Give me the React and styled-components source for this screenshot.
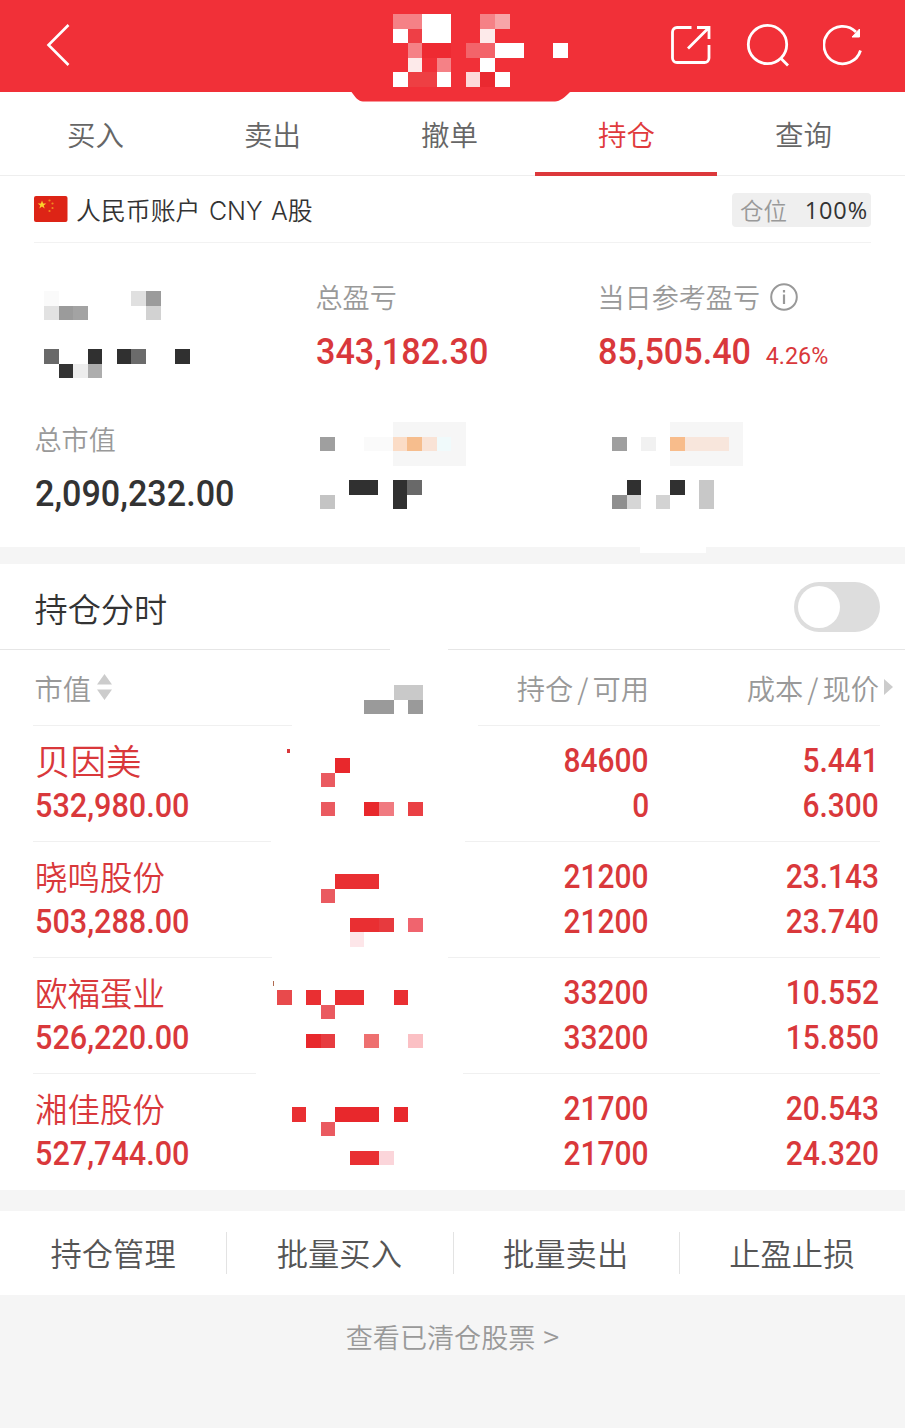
import React from "react";
import styled, { createGlobalStyle } from "styled-components";

const GlobalStyle = createGlobalStyle`
  * {
    box-sizing: border-box;
  }
  body {
    margin: 0;
    background: #f5f5f5;
    font-family: "Noto Sans CJK SC", sans-serif;
    font-weight: 350;
    color: #333;
  }
`;

const CELL = 14.565;

// each cell: [column, row, columns wide, rows high, colour]
const Mosaic = ({ cols, rows, cells, left, top }) => (
  <MosaicSvg
    width={cols * CELL}
    height={rows * CELL}
    viewBox={`0 0 ${cols} ${rows}`}
    shapeRendering="crispEdges"
    $left={left}
    $top={top}
  >
    {cells.map(([x, y, w, h, fill], i) => (
      <rect key={i} x={x} y={y} width={w} height={h} fill={fill} />
    ))}
  </MosaicSvg>
);

const TABS = ["买入", "卖出", "撤单", "持仓", "查询"];
const ACTIONS = ["持仓管理", "批量买入", "批量卖出", "止盈止损"];

const TITLE_CELLS = [
  [0, 0, 2, 1, "#f58186"],
  [2, 0, 2, 2, "#fff"],
  [6, 0, 1, 1, "#f58186"],
  [7, 0, 1, 1, "#f7a5a8"],
  [0, 1, 1, 1, "#fff"],
  [1, 1, 1, 1, "#ee3f46"],
  [6, 1, 1, 1, "#fdeaea"],
  [1, 2, 1, 1, "#f58186"],
  [2, 2, 2, 1, "#ee2a32"],
  [5, 2, 2, 1, "#f3646a"],
  [7, 2, 2, 1, "#fff"],
  [11, 2, 1, 1, "#fff"],
  [1, 3, 1, 1, "#fdeaea"],
  [3, 3, 1, 1, "#f58186"],
  [6, 3, 1, 1, "#fff"],
  [0, 4, 1, 1, "#fff"],
  [1, 4, 2, 1, "#ee3f43"],
  [3, 4, 1, 1, "#fff"],
  [5, 4, 1, 1, "#fdd9da"],
  [6, 4, 1, 1, "#ea2930"],
  [7, 4, 1, 1, "#fff"],
];

const HOLDINGS = [
  {
    name: "贝因美",
    nameSize: 35.5,
    value: "532,980.00",
    amount: ["84600", "0"],
    price: ["5.441", "6.300"],
    gap: [271, 465],
    top: 31.6,
    cells: [
      [0.7, -0.65, 0.2, 0.3, "#d9383b"],
      [4, 0, 1, 1, "#e8282c"],
      [3, 1, 1, 1, "#ea5a60"],
      [3, 3, 1, 1, "#ea5a60"],
      [6, 3, 1, 1, "#e8282c"],
      [7, 3, 1, 1, "#f07a80"],
      [9, 3, 1, 1, "#ea4044"],
    ],
  },
  {
    name: "晓鸣股份",
    value: "503,288.00",
    amount: ["21200", "21200"],
    price: ["23.143", "23.740"],
    gap: [272, 448],
    top: 32,
    cells: [
      [4, 0, 3, 1, "#e92f32"],
      [3, 1, 1, 1, "#ea5a60"],
      [5, 3, 2, 1, "#e92f32"],
      [7, 3, 1, 1, "#e73a3e"],
      [9, 3, 1, 1, "#f0646e"],
      [5, 4, 1, 1, "#fde6e9"],
    ],
  },
  {
    name: "欧福蛋业",
    value: "526,220.00",
    amount: ["33200", "33200"],
    price: ["10.552", "15.850"],
    gap: [256, 463],
    top: 32.4,
    cells: [
      [-0.3, -0.6, 0.07, 0.3, "#b06a50"],
      [0, 0, 1, 1, "#e84a4c"],
      [2, 0, 1, 1, "#e92f32"],
      [4, 0, 2, 1, "#e92f32"],
      [8, 0, 1, 1, "#e92f32"],
      [3, 1, 1, 1, "#ea5a60"],
      [2, 3, 1, 1, "#e8282c"],
      [3, 3, 1, 1, "#e73c40"],
      [6, 3, 1, 1, "#ee7070"],
      [9, 3, 1, 1, "#fbc0c4"],
    ],
  },
  {
    name: "湘佳股份",
    value: "527,744.00",
    amount: ["21700", "21700"],
    price: ["20.543", "24.320"],
    top: 32.7,
    cells: [
      [1, 0, 1, 1, "#e92f32"],
      [4, 0, 3, 1, "#e8282c"],
      [8, 0, 1, 1, "#e8282c"],
      [3, 1, 1, 1, "#ea5a60"],
      [5, 3, 2, 1, "#e92f32"],
      [7, 3, 1, 1, "#fbd5da"],
    ],
  },
];

const Header = () => (
  <TopBar>
    <BackIcon width="26" height="44" viewBox="0 0 26 44">
      <path d="M23.500 2 3.500 22l20 20" />
    </BackIcon>
    <TitleBump width="224" height="12" viewBox="0 0 224 12">
      <path d="M0 0h224v.5c-2 0-3 .5-4 1.500-4 4-9 8.500-14 8.500H14C9.500 10.500 6 6 2.500 1 2 .5 1 .5 0 .5z" />
    </TitleBump>
    <Mosaic cols={12} rows={5} cells={TITLE_CELLS} left={323} top={0} />
    <TopIcons>
      <svg width="42" height="44" viewBox="0 0 42 44">
        <path d="M20.500 4.500H6a4.500 4.500 0 0 0-4.500 4.500V35A4.500 4.500 0 0 0 6 39.500h27.500A4.500 4.500 0 0 0 38 35V22" />
        <path d="M26 4.500h12V16M37.500 5 17 25.500" />
      </svg>
      <svg width="44" height="44" viewBox="0 0 44 44">
        <circle cx="21.500" cy="21.500" r="19.200" />
        <path d="m35 35.500 7 7" />
      </svg>
      <svg width="42" height="44" viewBox="0 0 42 44">
        <path d="M37.500 27.500A18.700 18.700 0 1 1 33 9" />
        <path d="M36.500 6v8h-7.500z" fill="#fff" strokeWidth="1" />
      </svg>
    </TopIcons>
  </TopBar>
);

const Account = () => (
  <AccountRow>
    <svg width="34" height="26" viewBox="0 0 34 26">
      <rect width="33.500" height="26" rx="2" fill="#dd2416" />
      <path
        d="m8 4.500 1.100 3h3.200L9.700 9.400l1 3.100L8 10.600l-2.700 1.900 1-3.100-2.600-1.900h3.200z"
        fill="#fbd22c"
      />
      <g fill="#f08a20">
        <circle cx="15.500" cy="4.500" r="1.100" />
        <circle cx="18.500" cy="7.500" r="1.100" />
        <circle cx="18.500" cy="12" r="1.100" />
        <circle cx="15.500" cy="15" r="1.100" />
      </g>
    </svg>
    <AccountName>人民币账户 CNY A股</AccountName>
    <Badge>
      仓位<b>100%</b>
    </Badge>
  </AccountRow>
);

const Summary = () => (
  <SummaryGrid>
    <div>
      <Mosaic
        cols={11}
        rows={6}
        left={9}
        top={12}
        cells={[
          [0, 0, 1, 1, "#fafafa"],
          [0, 1, 1, 1, "#e2e2e2"],
          [1, 1, 1, 1, "#9b9b9b"],
          [2, 1, 1, 1, "#a3a3a3"],
          [6, 0, 1, 1, "#e0e0e0"],
          [7, 0, 1, 1, "#9b9b9b"],
          [7, 1, 1, 1, "#d2d2d2"],
          [0, 4, 1, 1, "#696969"],
          [3, 4, 1, 1, "#303030"],
          [5, 4, 1, 1, "#303030"],
          [6, 4, 1, 1, "#6b6b6b"],
          [9, 4, 1, 1, "#303030"],
          [1, 5, 1, 1, "#333"],
          [2, 5, 1, 1, "#ededed"],
          [3, 5, 1, 1, "#adadad"],
        ]}
      />
    </div>
    <div>
      <Label>总盈亏</Label>
      <Figure $red>343,182.30</Figure>
    </div>
    <div>
      <Label>
        当日参考盈亏
        <svg width="28" height="28" viewBox="0 0 28 28">
          <circle cx="14" cy="14" r="12.800" fill="none" stroke="#999" strokeWidth="2" />
          <path d="M14 11.500v9.500M14 7v2.500" stroke="#999" strokeWidth="2.200" />
        </svg>
      </Label>
      <FigureLine>
        <Figure $red>85,505.40</Figure>
        <Percent>4.26%</Percent>
      </FigureLine>
    </div>
    <div>
      <Label>总市值</Label>
      <Figure>2,090,232.00</Figure>
    </div>
    <div>
      <Mosaic
        cols={11}
        rows={6}
        left={4}
        top={1}
        cells={[
          [5, 0, 5, 3, "#f6f6f6"],
          [0, 1, 1, 1, "#9f9f9f"],
          [3, 1, 2, 1, "#fafafa"],
          [5, 1, 1, 1, "#fbdcc6"],
          [6, 1, 1, 1, "#f6bd8d"],
          [7, 1, 1, 1, "#f9e3d6"],
          [8, 1, 1, 1, "#f0fafb"],
          [2, 4, 2, 1, "#303030"],
          [5, 4, 1, 2, "#303030"],
          [6, 4, 1, 1, "#696969"],
          [0, 5, 1, 1, "#c4c4c4"],
        ]}
      />
    </div>
    <div>
      <Mosaic
        cols={10}
        rows={6}
        left={14}
        top={1}
        cells={[
          [4, 0, 5, 3, "#f6f6f6"],
          [0, 1, 1, 1, "#9f9f9f"],
          [2, 1, 1, 1, "#f1f1f1"],
          [4, 1, 1, 1, "#f8bc8b"],
          [5, 1, 3, 1, "#f8e6dc"],
          [1, 4, 1, 1, "#303030"],
          [4, 4, 1, 1, "#303030"],
          [6, 4, 1, 2, "#c8c8c8"],
          [0, 5, 1, 1, "#8f8f8f"],
          [1, 5, 1, 1, "#d6d6d6"],
          [3, 5, 1, 1, "#d3d3d3"],
        ]}
      />
    </div>
  </SummaryGrid>
);

const Holding = ({ item }) => (
  <HoldingRow $gap={item.gap}>
    <div>
      <Name $size={item.nameSize}>{item.name}</Name>
      <Num>{item.value}</Num>
    </div>
    <Mosaic cols={10} rows={5} cells={item.cells} left={3} top={item.top} />
    <RightCell>
      <Num $right>{item.amount[0]}</Num>
      <Num $right>{item.amount[1]}</Num>
    </RightCell>
    <RightCell>
      <Num $right>{item.price[0]}</Num>
      <Num $right>{item.price[1]}</Num>
    </RightCell>
  </HoldingRow>
);

const App = () => {
  return (
    <Page>
      <GlobalStyle />
      <Header />
      <TabBar>
        {TABS.map((tab) => (
          <Tab key={tab} $active={tab === "持仓"}>
            {tab}
          </Tab>
        ))}
      </TabBar>
      <Panel>
        <Account />
        <Summary />
      </Panel>
      <Band $height={17} $notch />
      <Panel>
        <SwitchRow>
          持仓分时
          <Toggle />
        </SwitchRow>
        <ColumnHead $gap={[292, 478]}>
          <HeadLabel>
            市值
            <svg width="15" height="28" viewBox="0 0 15 28">
              <path d="M7.500 1 15 11.500H0zM7.500 27 15 16.500H0z" fill="#ccc" />
            </svg>
          </HeadLabel>
          <Mosaic
            cols={10}
            rows={2}
            left={3}
            top={34.6}
            cells={[
              [8, 0, 2, 1, "#c9c9c9"],
              [6, 1, 2, 1, "#9a9a9a"],
              [9, 1, 1, 1, "#9a9a9a"],
            ]}
          />
          <HeadLabel $right>
            持仓<i>/</i>可用
          </HeadLabel>
          <HeadLabel $right>
            成本<i>/</i>现价
            <Arrow width="9" height="16" viewBox="0 0 9 16">
              <path d="M0 0 9 8 0 16z" fill="#ccc" />
            </Arrow>
          </HeadLabel>
        </ColumnHead>
        {HOLDINGS.map((item) => (
          <Holding key={item.name} item={item} />
        ))}
      </Panel>
      <Band $height={21} />
      <ActionBar>
        {ACTIONS.map((action) => (
          <Action key={action}>{action}</Action>
        ))}
      </ActionBar>
      <Cleared>
        查看已清仓股票<span>&gt;</span>
      </Cleared>
    </Page>
  );
};

export default App;

const Page = styled.main`
  width: 905px;
  height: 1428px;
  overflow: hidden;
`;
const MosaicSvg = styled.svg`
  display: block;
  flex: none;
  overflow: visible;
  margin-left: ${(p) => p.$left}px;
  margin-top: ${(p) => p.$top}px;
`;
const TopBar = styled.header`
  position: relative;
  z-index: 1;
  display: flex;
  align-items: flex-start;
  height: 92px;
  padding: 14.2px 40px 0 45px;
  background: #f13038;
`;
const BackIcon = styled.svg`
  margin-top: 8.5px;
  margin-right: -1px;
  fill: none;
  stroke: #fff;
  stroke-width: 2.6;
`;
const TitleBump = styled.svg`
  position: absolute;
  left: 349px;
  top: 91px;
  fill: #f13038;
`;
const TopIcons = styled.div`
  display: flex;
  gap: 33px;
  margin: 9px 0 0 auto;

  svg {
    fill: none;
    stroke: #fff;
    stroke-width: 2.8;
  }
`;
const TabBar = styled.nav`
  display: flex;
  height: 84px;
  padding: 0 13px 0 7px;
  background: #fff;
  border-bottom: 1px solid #eee;
`;
const Tab = styled.div`
  position: relative;
  flex: 1;
  line-height: 83px;
  text-align: center;
  font-size: 28.5px;
  color: ${(p) => (p.$active ? "#e03a3c" : "#666")};

  &::after {
    content: "";
    display: ${(p) => (p.$active ? "block" : "none")};
    position: absolute;
    left: -3px;
    right: -2px;
    bottom: -1px;
    height: 4px;
    background: #dc383b;
  }
`;
const Panel = styled.section`
  background: #fff;
`;
const AccountRow = styled.div`
  display: flex;
  align-items: center;
  height: 67px;
  margin: 0 34px;
  border-bottom: 1px solid #f2f2f2;
`;
const AccountName = styled.span`
  margin-left: 8px;
  font-family: Inter, "Noto Sans CJK SC", sans-serif;
  font-size: 24.9px;
  word-spacing: 1.5px;
`;
const Badge = styled.span`
  display: flex;
  justify-content: space-between;
  align-items: center;
  width: 139px;
  height: 34px;
  margin-top: 1px;
  margin-left: auto;
  padding: 0 3px 0 8px;
  border-radius: 4px;
  background: #efefef;
  color: #999;
  font-size: 23.5px;

  b {
    font: 400 23.5px "Open Sans", sans-serif;
    letter-spacing: 0.9px;
    color: #333;
  }
`;
const SummaryGrid = styled.div`
  display: grid;
  grid-template-columns: 281px 282px 1fr;
  grid-template-rows: 142px 126px;
  height: 304px;
  padding: 36px 0 0 35px;
`;
const Label = styled.div`
  display: flex;
  align-items: center;
  gap: 10px;
  height: 34px;
  margin-left: -0.5px;
  font-size: 27.1px;
  color: #999;

  svg {
    margin-top: 2px;
  }
`;
const FigureLine = styled.div`
  display: flex;
  align-items: baseline;
`;
const Num = styled.div`
  width: max-content;
  font: 500 34px/45px Roboto, sans-serif;
  color: #d9383b;
  transform: scaleX(${(p) => (p.$right ? 0.88 : 0.9)});
  transform-origin: ${(p) => (p.$right ? "right" : "left")};
`;
const Figure = styled(Num)`
  margin-top: 16px;
  font-size: 37px;
  color: ${(p) => (p.$red ? "#d9383b" : "#333")};
  transform: scaleX(0.923);
`;
const Percent = styled.span`
  margin-left: 2px;
  font: 400 23.3px Roboto, sans-serif;
  color: #d9383b;
`;
const Band = styled.div`
  height: ${(p) => p.$height}px;
  background: ${(p) =>
    p.$notch
      ? "linear-gradient(#fff, #fff) 640px 0 / 66px 6px no-repeat #f5f5f5"
      : "#f5f5f5"};
`;
const SwitchRow = styled.div`
  display: flex;
  align-items: center;
  justify-content: space-between;
  height: 86px;
  padding: 0 25.5px 0 34.5px;
  font-size: 33.2px;
  background: linear-gradient(
      90deg,
      #e6e6e6 390px,
      transparent 390px 448px,
      #e6e6e6 448px
    )
    bottom / 100% 1px no-repeat;
`;
const Toggle = styled.span`
  width: 86px;
  height: 50px;
  padding: 4px;
  border-radius: 25px;
  background: #ddd;

  &::before {
    content: "";
    display: block;
    width: 42px;
    height: 42px;
    border-radius: 50%;
    background: #fff;
  }
`;
// columns shared by the table head and the rows, with a broken divider below
const Row = styled.div`
  display: grid;
  grid-template-columns: 239px 180px 195px 230px;
  padding-left: 35px;
  ${(p) =>
    p.$gap &&
    `background: linear-gradient(90deg, transparent 33px, #f0f0f0 33px ${p.$gap[0]}px,
      transparent ${p.$gap[0]}px ${p.$gap[1]}px, #f0f0f0 ${p.$gap[1]}px 880px, transparent 880px)
      bottom / 100% 1px no-repeat;`}
`;
const ColumnHead = styled(Row)`
  height: 76px;
`;
const HeadLabel = styled.div`
  position: relative;
  display: flex;
  align-items: center;
  justify-content: ${(p) => (p.$right ? "flex-end" : "flex-start")};
  gap: ${(p) => (p.$right ? 5 : 6)}px;
  height: 74px;
  margin-left: -0.5px;
  font-size: 28.3px;
  color: #999;

  i {
    margin: 0 -1px;
    font-style: normal;
  }
`;
const Arrow = styled.svg`
  position: absolute;
  right: -14px;
`;
const HoldingRow = styled(Row)`
  height: 116px;
`;
const Name = styled.div`
  height: 43px;
  margin-top: 13px;
  margin-bottom: 1px;
  line-height: 42px;
  font-size: ${(p) => p.$size || 32.5}px;
  color: #d9383b;
`;
const RightCell = styled.div`
  display: flex;
  flex-direction: column;
  align-items: flex-end;
  padding-top: 12px;
`;
const ActionBar = styled.div`
  display: flex;
  height: 84px;
  background: #fff;
`;
const Action = styled.div`
  flex: 1;
  line-height: 83px;
  text-align: center;
  font-size: 31.3px;
  color: #555;

  & + & {
    background: linear-gradient(#e3e3e3, #e3e3e3) left center / 1px 42px no-repeat;
  }
`;
const Cleared = styled.div`
  line-height: 84px;
  text-align: center;
  font-size: 27.1px;
  color: #999;

  span {
    margin-left: 8px;
    font-size: 29px;
    line-height: 1;
  }
`;
